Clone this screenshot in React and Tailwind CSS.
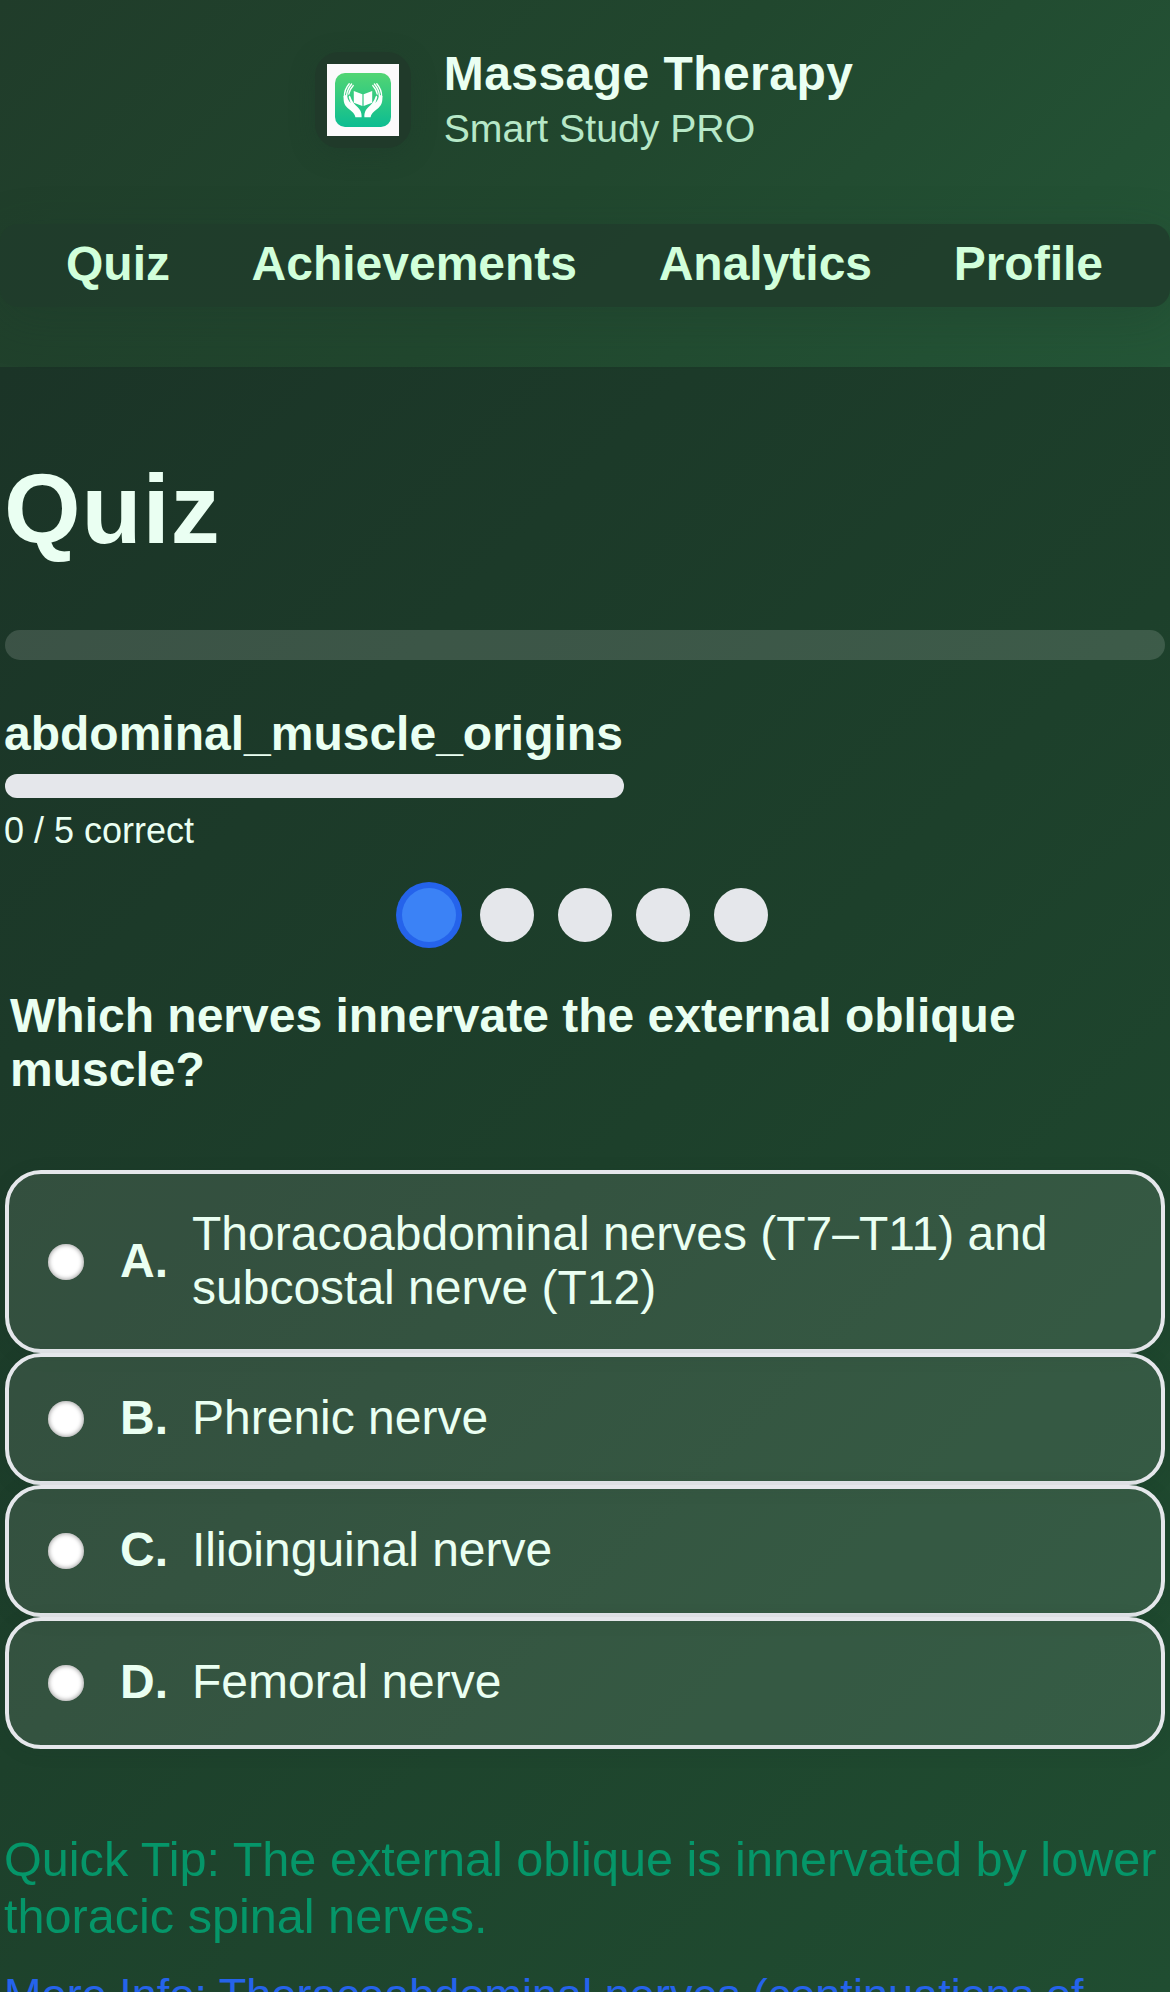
const NAV = ["Quiz", "Achievements", "Analytics", "Profile"];

const OPTIONS = [
  { letter: "A.", text: "Thoracoabdominal nerves (T7–T11) and subcostal nerve (T12)" },
  { letter: "B.", text: "Phrenic nerve" },
  { letter: "C.", text: "Ilioinguinal nerve" },
  { letter: "D.", text: "Femoral nerve" },
];

function Logo() {
  return (
    <svg viewBox="0 0 72 72" className="block h-[72px] w-[72px]">
      <defs>
        <linearGradient id="tile" x1="0" y1="0" x2="0" y2="1">
          <stop offset="0" stopColor="#52d573" />
          <stop offset="1" stopColor="#0cbd92" />
        </linearGradient>
        <g id="hand">
          <path
            d="M16.6 32 C16.4 38 17.4 41 20.6 44 C24 47 27.4 48.6 28.4 53.2 L34.6 53.2 C35 47.4 32.4 44.4 28.6 41.2 C26.4 39.2 24.8 36.4 23.6 33 C22.8 31 21.6 31.4 21.8 33.4 L23.6 39 C21.2 36.4 20 33.4 20.2 30.4 Z"
            fill="#fdfffe"
          />
          <path
            d="M17.4 33 C17.2 28 18.6 24 22.2 19.8 M19.6 31.4 C19.8 27.6 21.4 24 24.6 20 M21.8 30 C22.2 27 23.8 24.4 26.2 21.6"
            stroke="#fdfffe"
            strokeWidth="1.4"
            strokeLinecap="round"
            fill="none"
          />
        </g>
      </defs>
      <rect width="72" height="72" fill="#fbfafb" />
      <rect x="8" y="9" width="56" height="54" rx="10" fill="url(#tile)" />
      <use href="#hand" />
      <use href="#hand" transform="translate(72 0) scale(-1 1)" />
      <path d="M26.8 27 L35.4 30.2 V42 L26.8 38.8 Z M45.2 27 L36.6 30.2 V42 L45.2 38.8 Z" fill="#fdfffe" />
    </svg>
  );
}

function Header() {
  return (
    <header className="flex h-[367px] flex-col bg-[linear-gradient(135deg,#203c2a_0%,#21472e_50%,#245637_100%)] pt-[46px]">
      <div className="flex h-[108px] items-center justify-center gap-[33px] pr-[2px]">
        <div className="rounded-3xl bg-[#203a2a] p-3 shadow-[0_6px_24px_rgba(30,58,42,0.35)]">
          <Logo />
        </div>
        <div className="flex flex-col pt-px">
          <span className="text-[48px] leading-[56px] font-bold tracking-[0.45px] text-[#eafff2]">Massage Therapy</span>
          <span className="text-[39.2px] leading-[54px] text-[#b7e8c8]">Smart Study PRO</span>
        </div>
      </div>
      <nav className="mt-[70px] flex h-[83px] justify-center gap-[81.6px] rounded-[18px] bg-[#203c2b]/85 pt-3 pr-px shadow-[0_12px_48px_rgba(30,58,42,0.28)]">
        {NAV.map((item) => (
          <a key={item} className="text-[48px] leading-[56px] font-bold text-[#d1ffdb]">
            {item}
          </a>
        ))}
      </nav>
    </header>
  );
}

function Dots() {
  return (
    <div className="mt-[39px] flex justify-center gap-6">
      <span className="h-[54px] w-[54px] rounded-full bg-[#3b82f6] shadow-[0_0_0_6px_#2563eb]" />
      {[2, 3, 4, 5].map((n) => (
        <span key={n} className="h-[54px] w-[54px] rounded-full bg-gray-200" />
      ))}
    </div>
  );
}

function Option({ letter, text, tall }) {
  return (
    <label
      className={`flex items-center rounded-[36px] border-4 border-gray-200 bg-white/10 pr-10 pb-[2px] pl-[39px] shadow-[0_3px_18px_rgba(27,52,39,0.12)] ${
        tall ? "h-[183px]" : "h-[132px]"
      }`}
    >
      <span className="mt-[2px] h-9 w-9 shrink-0 rounded-full bg-white shadow-[inset_0_0_4px_1px_rgba(0,0,0,0.35)]" />
      <span className="ml-9 w-[72px] shrink-0 text-[48px] leading-[54px] font-bold">{letter}</span>
      <span className="w-[900px] text-[48px] leading-[54px]">{text}</span>
    </label>
  );
}

export default function App() {
  return (
    <div className="h-[1992px] w-[1170px] overflow-hidden font-['Liberation_Sans',Arial,sans-serif] text-[#eafff2]">
      <Header />
      <main className="h-[1625px] bg-[linear-gradient(135deg,#1b3427_0%,#1d402b_50%,#204d31_100%)] px-[5px] pt-[87px]">
        <h1 className="-ml-px text-[98.5px] leading-[110px] font-bold tracking-[0.8px]">Quiz</h1>
        <div className="mt-[66px] h-[30px] rounded-full bg-white/14" />
        <div className="mt-[46px] w-[619px]">
          <div className="-ml-px text-[48px] leading-[56px] font-bold">abdominal_muscle_origins</div>
          <div className="mt-3 h-6 rounded-full bg-gray-200" />
          <div className="mt-[15px] -ml-px text-[36px] leading-[36px]">0 / 5 correct</div>
        </div>
        <Dots />
        <h2 className="mt-[47px] px-[5px] text-[48px] leading-[54px] font-bold">
          Which nerves innervate the external oblique muscle?
        </h2>
        <div className="mt-[73px] flex flex-col">
          {OPTIONS.map((o, i) => (
            <Option key={o.letter} {...o} tall={i === 0} />
          ))}
        </div>
        <p className="mt-[82px] -ml-px w-[1166px] text-[48.6px] leading-[57px] text-[#059669]">
          Quick Tip: The external oblique is innervated by lower thoracic spinal nerves.
        </p>
        <p className="mt-[23px] -ml-px w-[1160px] text-[45.1px] leading-[54px] text-[#2563eb]">
          More Info: Thoracoabdominal nerves (continuations of
        </p>
      </main>
    </div>
  );
}
